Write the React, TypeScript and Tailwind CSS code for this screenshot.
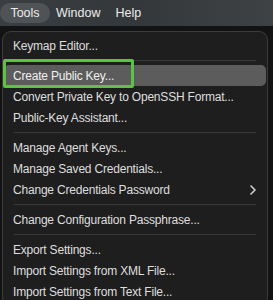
type Item = { label: string; sub?: boolean; active?: boolean } | "sep";

const items: Item[] = [
  { label: "Keymap Editor..." },
  "sep",
  { label: "Create Public Key...", active: true },
  { label: "Convert Private Key to OpenSSH Format..." },
  { label: "Public-Key Assistant..." },
  "sep",
  { label: "Manage Agent Keys..." },
  { label: "Manage Saved Credentials..." },
  { label: "Change Credentials Password", sub: true },
  "sep",
  { label: "Change Configuration Passphrase..." },
  "sep",
  { label: "Export Settings..." },
  { label: "Import Settings from XML File..." },
  { label: "Import Settings from Text File..." },
];

export default function App() {
  return (
    <div
      className="relative w-[273px] h-[300px] overflow-hidden bg-[#141314] text-[#dedede]"
      style={{ fontFamily: "'Liberation Sans', Arial, sans-serif" }}
    >
      {/* Menu bar */}
      <div className="h-[26px] flex items-center bg-gradient-to-r from-[#3a3e40] via-[#34383a] to-[#3e4244] text-[12.5px] text-[#ececec]">
        <div className="h-[20px] w-[50px] flex items-center justify-center rounded-full bg-[#505355]">
          Tools
        </div>
        <div className="ml-[6px]">Window</div>
        <div className="ml-[15px]">Help</div>
      </div>

      {/* Dropdown */}
      <div className="ml-[2px] mt-[5px] w-[266px] rounded-[9px] border border-[#3d3c3d] bg-[#1f1e1f] px-[1px] py-[3px] text-[12px] tracking-[-0.2px]">
        {items.map((it, i) =>
          it === "sep" ? (
            <div key={i} className="h-[9px] flex items-center px-[10px]">
              <div className="h-px w-full bg-[#3a393a]" />
            </div>
          ) : (
            <div
              key={i}
              className={`h-[21px] flex items-center justify-between pl-[9px] pr-[10px] rounded-[5px] whitespace-nowrap ${
                it.active ? "bg-[#5c5c5c] text-[#f0f0f0]" : ""
              }`}
            >
              <span>{it.label}</span>
              {it.sub && (
                <svg width="6" height="10" viewBox="0 0 6 10" className="text-[#d0d0d0]">
                  <path d="M1 1l4 4-4 4" fill="none" stroke="currentColor" strokeWidth="1.6" strokeLinecap="round" strokeLinejoin="round" />
                </svg>
              )}
            </div>
          )
        )}
      </div>

      {/* Annotation box */}
      <div className="absolute left-[3px] top-[59px] w-[131px] h-[29px] border-[3px] border-[#5cc441] rounded-[2px]" />
    </div>
  );
}
